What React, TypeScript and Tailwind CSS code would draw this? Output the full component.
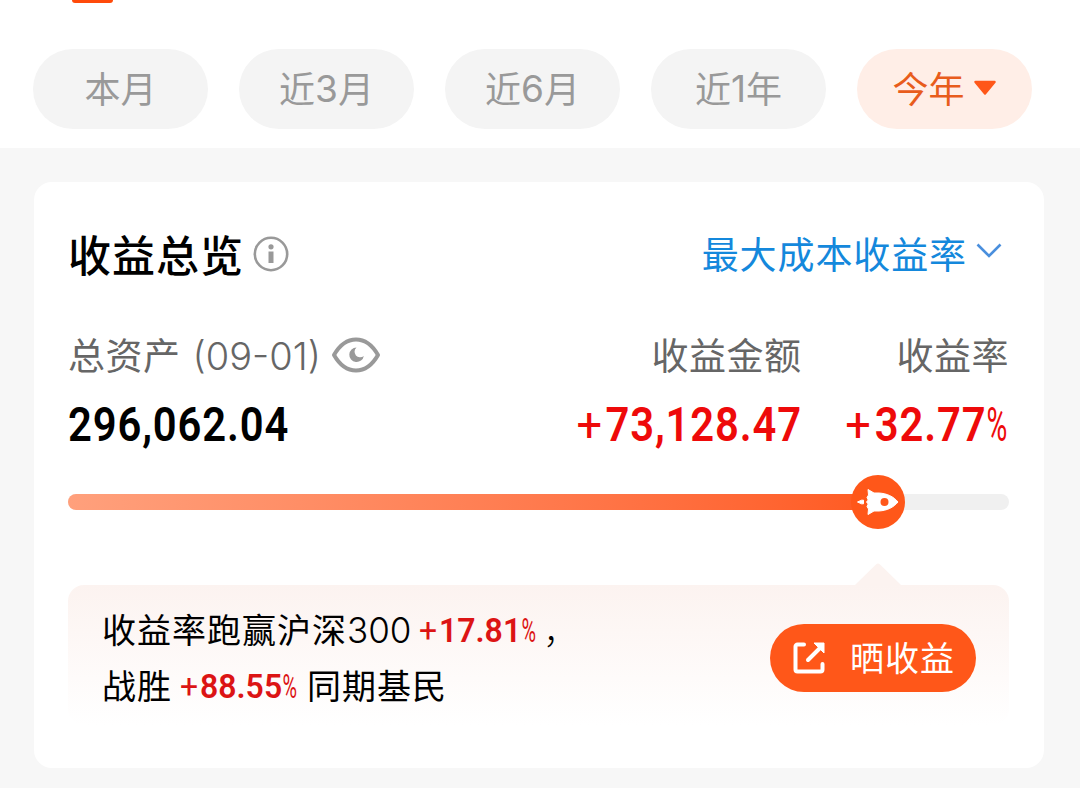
import React, { useState } from "react";

const periods = [
  { id: 1, pre: "本月", num: "", post: "" },
  { id: 2, pre: "近", num: "3", post: "月" },
  { id: 3, pre: "近", num: "6", post: "月" },
  { id: 4, pre: "近", num: "1", post: "年" },
  { id: 5, pre: "今年", num: "", post: "" },
];

const InfoIcon: React.FC = () => (
  <svg width="36" height="36" viewBox="0 0 36 36" fill="none">
    <circle cx="18" cy="18" r="16.2" stroke="#999" strokeWidth="2.6" />
    <circle cx="18" cy="10.8" r="2.6" fill="#999" />
    <path d="M15.5 15.5h5V27h-5z" fill="#999" />
  </svg>
);

const EyeIcon: React.FC = () => (
  <svg width="50" height="38" viewBox="0 0 50 38" fill="none">
    <path
      d="M3 19C9 8.5 16 3.5 25 3.500S41 8.500 47 19C41 29.500 34 34.500 25 34.500S9 29.500 3 19z"
      stroke="#999"
      strokeWidth="4"
      strokeLinejoin="round"
    />
    <path
      d="M25.500 11.500a7.300 7.300 0 1 0 7.300 8.500a5 5 0 0 1-7.300-8.500z"
      fill="#999"
    />
  </svg>
);

const RocketIcon: React.FC = () => (
  <svg width="54" height="54" viewBox="0 0 54 54">
    <circle cx="27" cy="27" r="27" fill="#ff5719" />
    <path
      d="M17 14.500L23 18H28C36 18.500 42.500 21.500 47 27C42.500 32.500 36 35.500 28 36H23L17 39.500L17.500 34L16 31.500L17.200 29L15.500 27L17.200 25L16 22.500L17.500 20z"
      fill="#fff"
      stroke="#fff"
      strokeLinejoin="round"
    />
    <circle cx="33.500" cy="27" r="4" fill="#ff5719" />
    <path
      d="M6.500 27l4-1.800h2v3.600h-2z"
      fill="#fff"
      stroke="#fff"
      strokeLinejoin="round"
    />
  </svg>
);

const ShareIcon: React.FC = () => (
  <svg width="34" height="34" viewBox="0 0 34 34" fill="none">
    <path
      d="M12 3.500H5.500a2 2 0 0 0-2 2v23a2 2 0 0 0 2 2h23a2 2 0 0 0 2-2V23"
      stroke="#fff"
      strokeWidth="4"
      strokeLinecap="round"
    />
    <path d="M16 19L28 7" stroke="#fff" strokeWidth="4" strokeLinecap="round" />
    <path d="M22 2H32v10z" fill="#fff" stroke="#fff" strokeLinejoin="round" />
  </svg>
);

const App: React.FC = () => {
  const [active, setActive] = useState(5);

  return (
    <div className="h-[788px] w-[1080px] overflow-hidden bg-[#f7f7f7] font-['Noto_Sans_CJK_SC',sans-serif] whitespace-nowrap">
      <header className="flex h-[148px] flex-col bg-white">
        <div className="ml-[72px] h-[3px] w-[41px] rounded-b-[3px] bg-[#ff4a0a]" />
        <div className="mt-[46px] flex gap-[31px] pl-[33px]">
          {periods.map((item) => (
            <button
              key={item.id}
              onClick={() => setActive(item.id)}
              className={`flex h-20 w-[175px] items-center justify-center rounded-full pb-1 text-[36px] leading-[76px] ${
                active === item.id
                  ? "bg-[#ffeee7] text-[#e85c1c]"
                  : "bg-[#f4f4f4] text-[#999]"
              }`}
            >
              <span>{item.pre}</span>
              {item.num && (
                <span className="pt-1 font-['Inter',sans-serif] text-[37px]">
                  {item.num}
                </span>
              )}
              <span>{item.post}</span>
              {item.id === 5 && (
                <svg className="mt-0.5 ml-2" width="24" height="16" viewBox="0 0 24 16">
                  <path
                    d="M2.500 2h19L12 13.500z"
                    fill="#ff5719"
                    stroke="#ff5719"
                    strokeWidth="2.500"
                    strokeLinejoin="round"
                  />
                </svg>
              )}
            </button>
          ))}
        </div>
      </header>

      <main className="mt-[34px] ml-[34px] h-[586px] w-[1010px] rounded-[18px] bg-white pt-[43px] pr-[35px] pl-[34px]">
        <div className="flex h-[60px] items-center justify-between">
          <div className="flex items-center">
            <h1 className="pb-1 text-[43px] leading-[56px] font-medium tracking-[1px] text-black">
              收益总览
            </h1>
            <span className="ml-[9px] pb-0.5">
              <InfoIcon />
            </span>
          </div>
          <div className="flex items-center pr-[7px] text-[#1488dc]">
            <span className="pb-1 text-[37px] leading-[56px] tracking-[0.900px]">
              最大成本收益率
            </span>
            <svg className="mb-2 ml-[9px]" width="26" height="16" viewBox="0 0 26 16" fill="none">
              <path d="M1.500 1.500L13 13L24.500 1.500" stroke="#4a8fdd" strokeWidth="2.600" />
            </svg>
          </div>
        </div>

        <div className="mt-[45px] flex h-[52px] items-center text-[37px] leading-[48px] tracking-[0.500px] text-[#666]">
          <span className="pb-1">总资产</span>
          <span className="ml-3 font-['Inter',sans-serif] text-[38px] font-light tracking-normal">
            (09-01)
          </span>
          <span className="ml-2.5 pb-0.5">
            <EyeIcon />
          </span>
          <span className="ml-auto pb-1">收益金额</span>
          <span className="ml-[95px] pb-1">收益率</span>
        </div>

        <div className="mt-[14px] flex h-[58px] items-center font-['Roboto',sans-serif] text-[48px] leading-[58px] font-semibold tracking-[1px]">
          <span className="origin-left scale-x-[0.870] text-black">296,062.04</span>
          <div className="ml-auto flex w-[222px] origin-right scale-x-[0.870] justify-end text-[#ee0a0a]">
            <span className="pr-[3px] font-normal">
              <span className="inline-block origin-right scale-x-[1.080]">+</span>
            </span>
            <span>73,128.47</span>
          </div>
          <div className="ml-[46px] flex w-[161px] origin-right scale-x-[0.870] justify-end text-[#ee0a0a]">
            <span className="pr-[3px] font-normal">
              <span className="inline-block origin-right scale-x-[1.080]">+</span>
            </span>
            <span>32.77</span>
            <span className="w-[26px] origin-left scale-x-[0.680] font-normal">%</span>
          </div>
        </div>

        <div className="mt-[21px] flex h-[54px] items-center">
          <div className="relative h-4 w-full rounded-full bg-[#f0f0f0]">
            <div className="h-4 w-[810px] rounded-l-full bg-linear-to-r from-[#ffa07c] to-[#ff5a20]" />
            <div className="absolute top-[-19px] left-[783px]">
              <RocketIcon />
            </div>
          </div>
        </div>

        <div className="relative mt-[56px] flex h-[140px] items-center justify-between rounded-[16px] bg-linear-to-b from-[#fcf3f0] to-white pt-1.5 pr-[33px] pl-[34px]">
          <svg className="absolute top-[-22px] left-[787px]" width="46" height="22" viewBox="0 0 46 22">
            <path d="M0 22L21 1.500q2-2 4 0L46 22z" fill="#fcf3f0" />
          </svg>
          <div className="text-[34px] leading-[56px] text-black">
            <div className="flex h-[56px] items-center">
              <span className="pb-0.5 tracking-[1px]">收益率跑赢沪深</span>
              <span className="font-['Inter',sans-serif] text-[35px] font-light">300</span>
              <span className="ml-2 flex w-[124px] origin-left scale-x-[0.940] font-['Roboto',sans-serif] font-semibold text-[#dc1414]">
                <span className="pr-0.5 font-normal">+</span>17.81
                <span className="w-[16px] origin-left scale-x-[0.620] font-normal">%</span>
              </span>
              <span className="font-light">，</span>
            </div>
            <div className="flex h-[56px] items-center">
              <span className="pb-0.5 tracking-[1px]">战胜</span>
              <span className="ml-2 flex w-[127px] origin-left scale-x-[0.940] font-['Roboto',sans-serif] font-semibold text-[#dc1414]">
                <span className="pr-0.5 font-normal">+</span>88.55
                <span className="w-[16px] origin-left scale-x-[0.620] font-normal">%</span>
              </span>
              <span className="pb-0.5 tracking-[1px]">同期基民</span>
            </div>
          </div>
          <button className="flex h-[68px] w-[206px] items-center rounded-full bg-[#ff5719] pl-[22px] text-[34px] leading-[64px] tracking-[1px] text-white">
            <ShareIcon />
            <span className="ml-6 pb-0.5">晒收益</span>
          </button>
        </div>
      </main>
    </div>
  );
};

export default App;
